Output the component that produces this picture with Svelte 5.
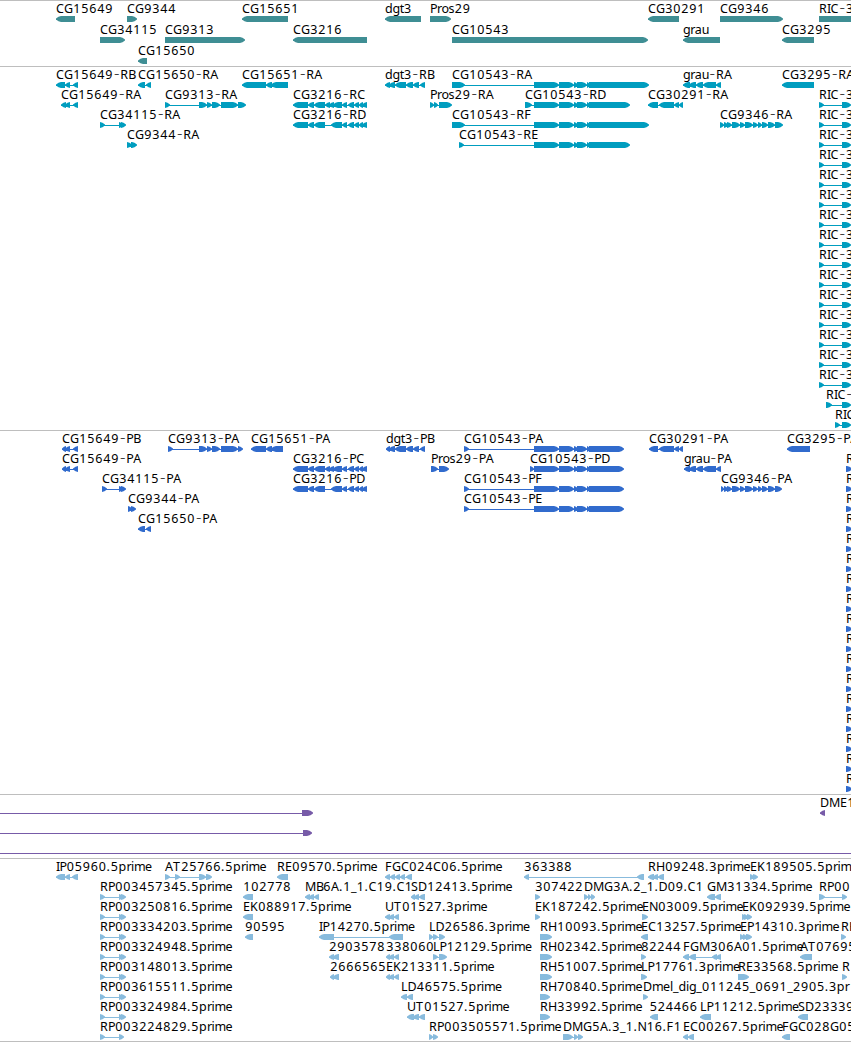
<script>
  // Feature: [label, row, direction, [start, end, start, end, ...], label x, options]
  const WIDE = [534, 559, 559, 574, 574, 578, 577, 587, 587, 590];
  const C3216 = [293, 308, 308, 314, 314, 325, 325, 330, 329, 334, 333, 342, 342, 347, 348, 354, 354, 359, 359, 363, 362, 367];
  const D3216 = [293, 308, 308, 314, 314, 325, 331, 342, 342, 347, 348, 354, 354, 359, 359, 363, 362, 367];
  const G9346 = [724, 728, 727, 732, 732, 740, 740, 745, 745, 753, 753, 758, 758, 762, 762, 768, 768, 775];
  const range = (a, b) => Array.from({ length: b - a + 1 }, (_, i) => a + i);

  const genes = [
    ['CG15649', 0, -1, [56, 75]], ['CG9344', 0, 1, [127, 137]], ['CG15651', 0, -1, [242, 288]],
    ['dgt3', 0, -1, [385, 421]], ['Pros29', 0, 1, [430, 451]], ['CG30291', 0, -1, [648, 679]],
    ['CG9346', 0, 1, [720, 783]], ['RIC-3', 0, 1, [819, 870]],
    ['CG34115', 1, 1, [100, 125]], ['CG9313', 1, 1, [165, 245]], ['CG3216', 1, -1, [293, 367]],
    ['CG10543', 1, 1, [452, 648]], ['grau', 1, -1, [683, 720]], ['CG3295', 1, -1, [782, 814]],
    ['CG15650', 2, -1, [138, 147]]
  ];

  const transcripts = [
    ['CG15649-RB', 0, -1, [56, 65, 65, 70, 73, 78]],
    ['CG15650-RA', 0, -1, [138, 145, 146, 151]],
    ['CG15651-RA', 0, -1, [242, 266, 266, 272, 271, 288]],
    ['dgt3-RB', 0, -1, [385, 390, 389, 395, 395, 406, 406, 413, 413, 419, 420, 425]],
    ['CG10543-RA', 0, 1, [452, 465, ...WIDE, 589, 649]],
    ['grau-RA', 0, -1, [683, 690, 689, 696, 696, 703, 703, 716, 716, 721]],
    ['CG3295-RA', 0, -1, [782, 814]],
    ['CG15649-RA', 1, -1, [61, 66, 65, 70, 73, 78]],
    ['CG9313-RA', 1, 1, [165, 170, 199, 207, 207, 212, 212, 220, 221, 238, 238, 246]],
    ['CG3216-RC', 1, -1, C3216],
    ['Pros29-RA', 1, 1, [430, 434, 434, 438, 439, 452]],
    ['CG10543-RD', 1, 1, [525, 532, ...WIDE, 589, 630]],
    ['CG30291-RA', 1, -1, [648, 658, 659, 674, 674, 679, 679, 683]],
    ['CG34115-RA', 2, 1, [100, 105, 119, 123, 121, 126]],
    ['CG3216-RD', 2, -1, D3216],
    ['CG10543-RF', 2, 1, [452, 465, ...WIDE, 589, 649]],
    ['CG9346-RA', 2, 1, [720, 724, ...G9346, 775, 783]],
    ['CG9344-RA', 3, 1, [127, 132, 131, 137]],
    ['CG10543-RE', 3, 1, [459, 464, ...WIDE, 589, 630]],
    ...range(1, 15).map((r) => ['RIC-3', r, 1, [819, 824, 842, 851]]),
    ['RIC-', 16, 1, [826, 832, 842, 851]],
    ['RIC', 17, 1, [835, 840, 842, 851]]
  ];

  const peptides = [
    ['CG15649-PB', 0, -1, [62, 66, 65, 70, 73, 78]],
    ['CG9313-PA', 0, 1, [168, 173, 199, 207, 207, 212, 212, 220, 221, 238, 238, 243]],
    ['CG15651-PA', 0, -1, [251, 266, 266, 272, 271, 283]],
    ['dgt3-PB', 0, -1, [386, 390, 389, 395, 395, 406, 406, 413, 413, 419, 420, 425]],
    ['CG10543-PA', 0, 1, [464, 469, ...WIDE, 589, 624]],
    ['CG30291-PA', 0, -1, [649, 658, 659, 674, 674, 679, 679, 683]],
    ['CG3295-PA', 0, -1, [787, 810]],
    ['CG15649-PA', 1, -1, [62, 66, 65, 70, 73, 78]],
    ['CG3216-PC', 1, -1, C3216],
    ['Pros29-PA', 1, 1, [431, 438, 439, 449]],
    ['CG10543-PD', 1, 1, [530, 534, ...WIDE, 589, 624]],
    ['grau-PA', 1, -1, [684, 690, 689, 696, 696, 703, 703, 716, 716, 721]],
    ['CG34115-PA', 2, 1, [102, 107, 119, 123, 121, 126]],
    ['CG3216-PD', 2, -1, D3216],
    ['CG10543-PF', 2, 1, [464, 469, ...WIDE, 589, 624]],
    ['CG9346-PA', 2, 1, [721, 724, ...G9346, 775, 782]],
    ['CG9344-PA', 3, 1, [128, 132, 131, 136]],
    ['CG10543-PE', 3, 1, [464, 469, ...WIDE, 589, 624]],
    ['CG15650-PA', 4, -1, [138, 145, 146, 151]],
    ...range(1, 17).map((r) => ['R', r, 1, [846, 852]])
  ];

  const repeats = [
    ['', 0, 1, [302, 313], 0, { from: 0 }],
    ['DME1', 0, -1, [820, 825]],
    ['', 1, 1, [303, 312], 0, { from: 0 }],
    ['', 2, 1, [], 0, { from: 0, to: 851 }]
  ];

  const rp = [100, 105, 119, 123, 121, 126];
  const ests = [
    ['IP05960.5prime', 0, -1, [56, 65, 65, 70, 72, 78]],
    ['AT25766.5prime', 0, 1, [165, 170, 175, 180, 199, 206, 206, 212]],
    ['RE09570.5prime', 0, -1, [277, 288]],
    ['FGC024C06.5prime', 0, -1, [385, 390, 390, 395, 395, 400, 400, 405, 406, 412]],
    ['363388', 0, -1, [524, 529, 637, 644]],
    ['RH09248.3prime', 0, -1, [648, 654, 653, 658, 658, 664]],
    ['EK189505.5prime', 0, 1, [750, 754, 753, 758]],
    ['RP003457345.5prime', 1, 1, rp],
    ['102778', 1, -1, [243, 253]],
    ['MB6A.1_1.C19.C1', 1, -1, [305, 310, 309, 314, 314, 319]],
    ['SD12413.5prime', 1, -1, [411, 415, 414, 419, 419, 425]],
    ['307422', 1, 1, [535, 540]],
    ['DMG3A.2_1.D09.C1', 1, 1, [584, 588, 588, 591, 591, 595]],
    ['GM31334.5prime', 1, -1, [707, 715, 715, 721]],
    ['RP00', 1, 1, [819, 825, 842, 847]],
    ['RP003250816.5prime', 2, 1, rp],
    ['EK088917.5prime', 2, -1, [243, 253]],
    ['UT01527.3prime', 2, -1, [385, 390, 389, 394, 394, 399]],
    ['EK187242.5prime', 2, 1, [535, 540]],
    ['EN03009.5prime', 2, 1, [642, 648]],
    ['EK092939.5prime', 2, 1, [742, 746, 744, 748, 747, 752]],
    ['RP003334203.5prime', 3, 1, rp],
    ['90595', 3, -1, [245, 253]],
    ['IP14270.5prime', 3, -1, [319, 334, 389, 403]],
    ['LD26586.3prime', 3, 1, [429, 433, 433, 438, 439, 445]],
    ['RH10093.5prime', 3, 1, [540, 552]],
    ['EC13257.5prime', 3, -1, [641, 648]],
    ['EP14310.3prime', 3, 1, [740, 744, 743, 747, 746, 752]],
    ['RH', 3, 1, [841, 846]],
    ['RP003324948.5prime', 4, 1, rp],
    ['2903578', 4, -1, [329, 334, 333, 339]],
    ['338060', 4, -1, [386, 390, 389, 394, 394, 399]],
    ['LP12129.5prime', 4, 1, [433, 438, 439, 447]],
    ['RH02342.5prime', 4, 1, [540, 552]],
    ['82244', 4, 1, [641, 646]],
    ['FGM306A01.5prime', 4, -1, [683, 689, 689, 696, 712, 717, 716, 721]],
    ['AT07695', 4, -1, [800, 812]],
    ['RP003148013.5prime', 5, 1, rp],
    ['2666565', 5, -1, [330, 334, 333, 339]],
    ['EK213311.5prime', 5, -1, [386, 390, 389, 394, 394, 399]],
    ['RH51007.5prime', 5, 1, [540, 552]],
    ['LP17761.3prime', 5, 1, [641, 647]],
    ['RE33568.5prime', 5, 1, [738, 749]],
    ['R', 5, 1, [842, 847]],
    ['RP003615511.5prime', 6, 1, rp],
    ['LD46575.5prime', 6, -1, [401, 407, 407, 413]],
    ['RH70840.5prime', 6, 1, [540, 550]],
    ['Dmel_dig_011245_0691_2905.3pr', 6, 1, [643, 648]],
    ['RP003324984.5prime', 7, 1, rp],
    ['UT01527.5prime', 7, -1, [407, 414, 413, 419, 419, 425]],
    ['RH33992.5prime', 7, 1, [540, 550]],
    ['524466', 7, -1, [650, 658], 649.5],
    ['LP11212.5prime', 7, -1, [700, 711]],
    ['SD23339', 7, -1, [798, 808]],
    ['RP003224829.5prime', 8, 1, [100, 105, 119, 124]],
    ['RP003505571.5prime', 8, 1, [429, 433, 433, 438]],
    ['DMG5A.3_1.N16.F1', 8, 1, [563, 573, 574, 578, 578, 583]],
    ['EC00267.5prime', 8, -1, [683, 688, 688, 694]],
    ['FGC028G05', 8, -1, [782, 790]]
  ];

  const tracks = [
    { name: 'genes', height: 66, pitch: 21, color: '#3f8e94', items: genes },
    { name: 'transcripts', height: 364, pitch: 20, color: '#009dbf', items: transcripts },
    { name: 'peptides', height: 364, pitch: 20, color: '#316bcd', items: peptides },
    { name: 'repeats', height: 64, pitch: 20, color: '#775ba8', items: repeats },
    { name: 'ests', height: 183, pitch: 20, color: '#88bbdd', items: ests }
  ];

  const advance = {
    A: 8, B: 7, C: 8, D: 9, E: 7, F: 7, G: 9, H: 9, I: 3.5, K: 8, L: 6.5, M: 11, N: 9, P: 7, R: 8,
    S: 7, T: 8, U: 9, '-': 7.3, '.': 4, _: 5.5, a: 7, d: 7.5, e: 7, g: 7.2, i: 3, l: 3, m: 11, o: 7, p: 8, r: 4.5,
    s: 6, t: 4, u: 7
  };
  function pens(label, x) {
    const out = [];
    for (const ch of label) {
      const digit = ch >= '0' && ch <= '9';
      out.push(x + (digit ? 0.3 : ch === '-' ? 0.9 : 0));
      x += digit ? 8 : advance[ch] ?? 7.5;
    }
    return out.join(' ');
  }

  function shapes(coords, dir, y) {
    let d = '';
    for (let i = 0; i < coords.length; i += 2) {
      const a = coords[i];
      const b = coords[i + 1];
      const head = Math.min(5, b - a);
      const h = (head / 2) * dir;
      const back = dir > 0 ? a : b;
      const neck = dir > 0 ? b - head : a + head;
      d += `M${back} ${y}H${neck}l${h} .8 ${h} 1.6v1.2l${-h} 1.6 ${-h} .8H${back}Z`;
    }
    return d;
  }
</script>

<main>
  {#each tracks as track}
    <section class="track" style:height="{track.height}px">
      <svg width="851" height={track.height} fill={track.color} aria-label={track.name}>
        {#each track.items as [label, row, dir, coords, at, span]}
          {@const top = row * track.pitch}
          {@const from = span?.from ?? coords[0]}
          {@const to = span?.to ?? coords[coords.length - 1]}
          {@const parts = label.split('-')}
          <rect x={from} y={top + 19} width={to - from - (span?.to ? 0 : 1)} height="1" shape-rendering="crispEdges" />
          <path d={shapes(coords, dir, top + 16)} />
          {#if label}
            <text y={top + 13} x={pens(label, at ?? coords[0])}>{parts[0]}{#if parts.length > 1}<tspan class="dash">-</tspan>{parts[1]}{/if}</text>
          {/if}
        {/each}
      </svg>
    </section>
  {/each}
</main>

<style>
  :global(body) {
    margin: 0;
    background: #fff;
  }
  main {
    display: flex;
    flex-direction: column;
    width: 851px;
    height: 1042px;
    overflow: hidden;
    border-bottom: 1px solid #bebebe;
    box-sizing: border-box;
  }
  .track {
    flex: none;
    box-sizing: border-box;
    overflow: hidden;
    background: linear-gradient(#bebebe, #bebebe) top / 100% 1px no-repeat;
  }
  svg {
    display: block;
  }
  text {
    font: 12.5px 'Noto Sans', sans-serif;
    fill: #000;
  }
  .dash {
    font-size: 17px;
    font-weight: 300;
    fill: #333;
  }
</style>
